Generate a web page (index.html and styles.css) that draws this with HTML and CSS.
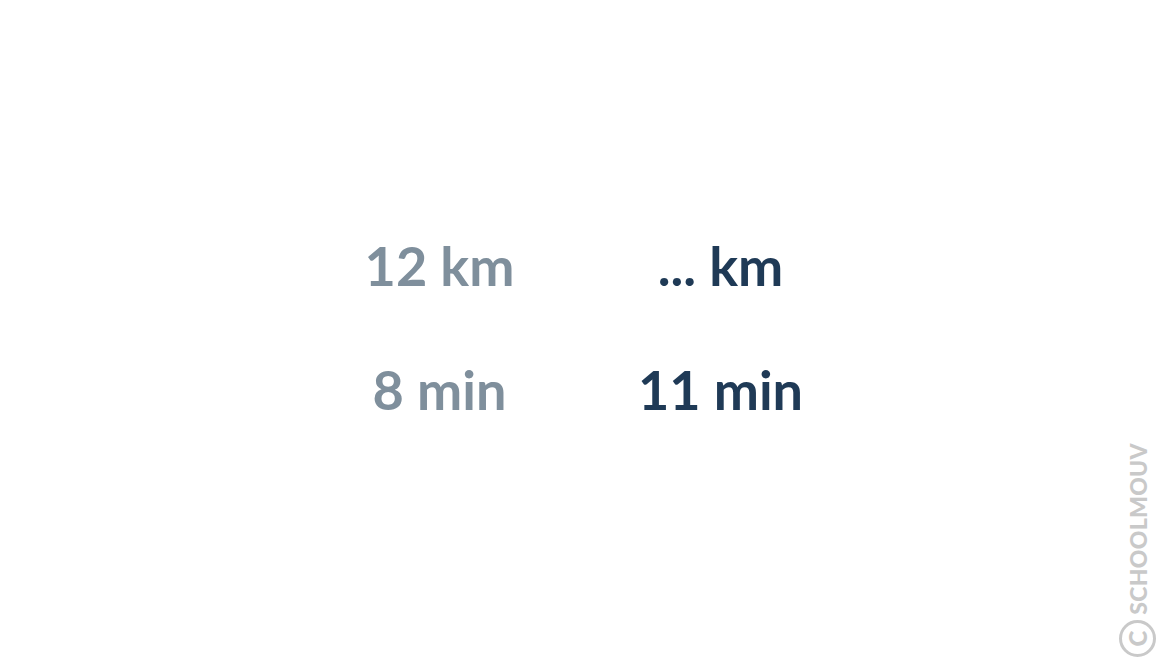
FILE: index.html
```html
<!DOCTYPE html>
<html lang="fr">
<head>
  <meta charset="UTF-8" />
  <title>Distances et durées</title>
  <link rel="stylesheet" href="styles.css">
</head>
<body>
  <div class="board">
    <div class="cell given">12 km</div>
    <div class="cell asked">... km</div>
    <div class="cell given">8 min</div>
    <div class="cell asked">11 min</div>
  </div>

  <div class="mark">
    <span class="mark-circle">C</span>
    <span class="mark-text">SCHOOLMOUV</span>
  </div>
</body>
</html>
```

FILE: styles.css
```css
* {
  box-sizing: border-box;
}

body {
  margin: 0;
  height: 670px;
  background: #ffffff;
  font-family: Lato, 'Open Sans', sans-serif;
  overflow: hidden;
}

.board {
  display: grid;
  grid-template-columns: 281px 281px;
  row-gap: 70px;
  margin-left: 299px;
  padding-top: 239px;
}

.cell {
  font-size: 54px;
  font-weight: 700;
  line-height: 54px;
  text-align: center;
}

.given {
  color: #7f8f9c;
}

.asked {
  color: #1f3a56;
}

/* watermark in the corner */
.mark {
  position: absolute;
  right: 14px;
  bottom: 13px;
  display: flex;
  flex-direction: column-reverse;
  align-items: center;
  gap: 5px;
  color: #c9c9c9;
}

.mark-text {
  writing-mode: vertical-rl;
  transform: rotate(180deg);
  font-size: 23px;
  font-weight: 900;
  letter-spacing: 0.3px;
}

.mark-circle {
  width: 37px;
  height: 37px;
  border: 3px solid #c9c9c9;
  border-radius: 50%;
  display: flex;
  justify-content: center;
  align-items: center;
  font-size: 24px;
  font-weight: 900;
  transform: rotate(-90deg);
}
```
